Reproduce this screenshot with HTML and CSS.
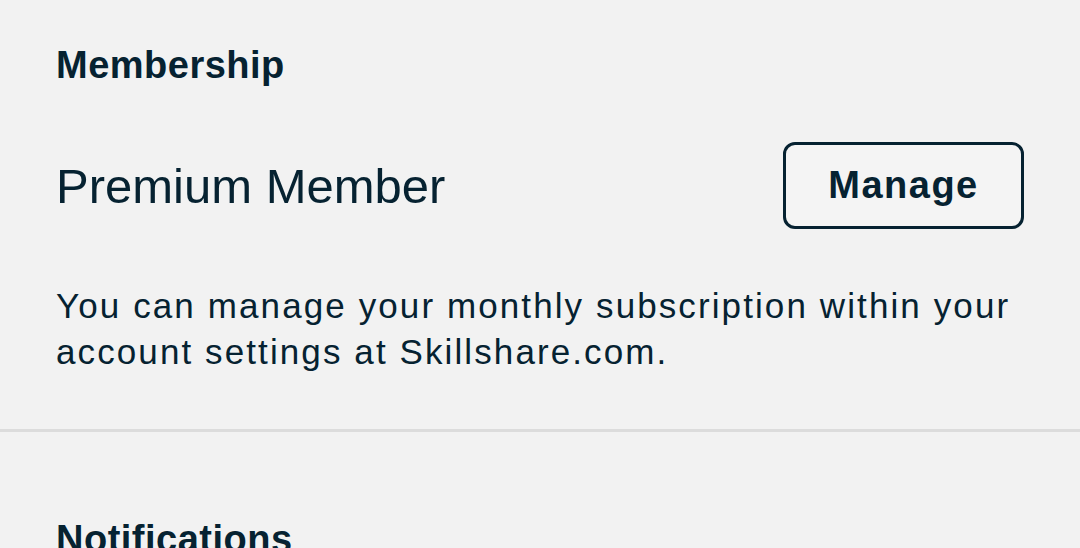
FILE: index.html
```html
<!DOCTYPE html>
<html lang="en">
<head>
  <meta charset="UTF-8">
  <title>Settings</title>
  <link rel="stylesheet" href="styles.css">
</head>
<body>

<div class="settings">
  <section class="section membership">
    <h2 class="section-title">Membership</h2>

    <div class="plan-row">
      <span class="plan-name">Premium Member</span>
      <button class="manage-btn">Manage</button>
    </div>

    <p class="plan-note">You can manage your monthly subscription within your account settings at Skillshare.com.</p>
  </section>

  <hr class="divider">

  <section class="section notifications">
    <h2 class="section-title">Notifications</h2>
  </section>
</div>

</body>
</html>
```

FILE: styles.css
```css
body {
  margin: 0;
  background-color: #f2f2f2;
  color: #062231;
  font-family: "Liberation Sans", Arial, sans-serif;
  overflow: hidden;
}

.section {
  padding: 42px 56px 54px;
}

.notifications {
  padding-top: 84px;
}

.section-title {
  margin: 0;
  font-size: 38px;
  line-height: 46px;
  font-weight: bold;
  letter-spacing: 0.5px;
}

.plan-row {
  display: flex;
  align-items: center;
  justify-content: space-between;
  margin-top: 54px;
}

.plan-name {
  font-size: 49px;
  line-height: 60px;
}

.manage-btn {
  width: 241px;
  height: 87px;
  border: 3px solid #062231;
  border-radius: 12px;
  background-color: #f4f4f4;
  color: #062231;
  font-family: inherit;
  font-size: 38px;
  font-weight: bold;
  letter-spacing: 1.5px;
  cursor: pointer;
}

.plan-note {
  margin: 54px 0 0;
  font-size: 35px;
  line-height: 46px;
  letter-spacing: 2.1px;
}

.divider {
  margin: 0;
  border: none;
  height: 3px;
  background-color: #dcdcdc;
}
```
